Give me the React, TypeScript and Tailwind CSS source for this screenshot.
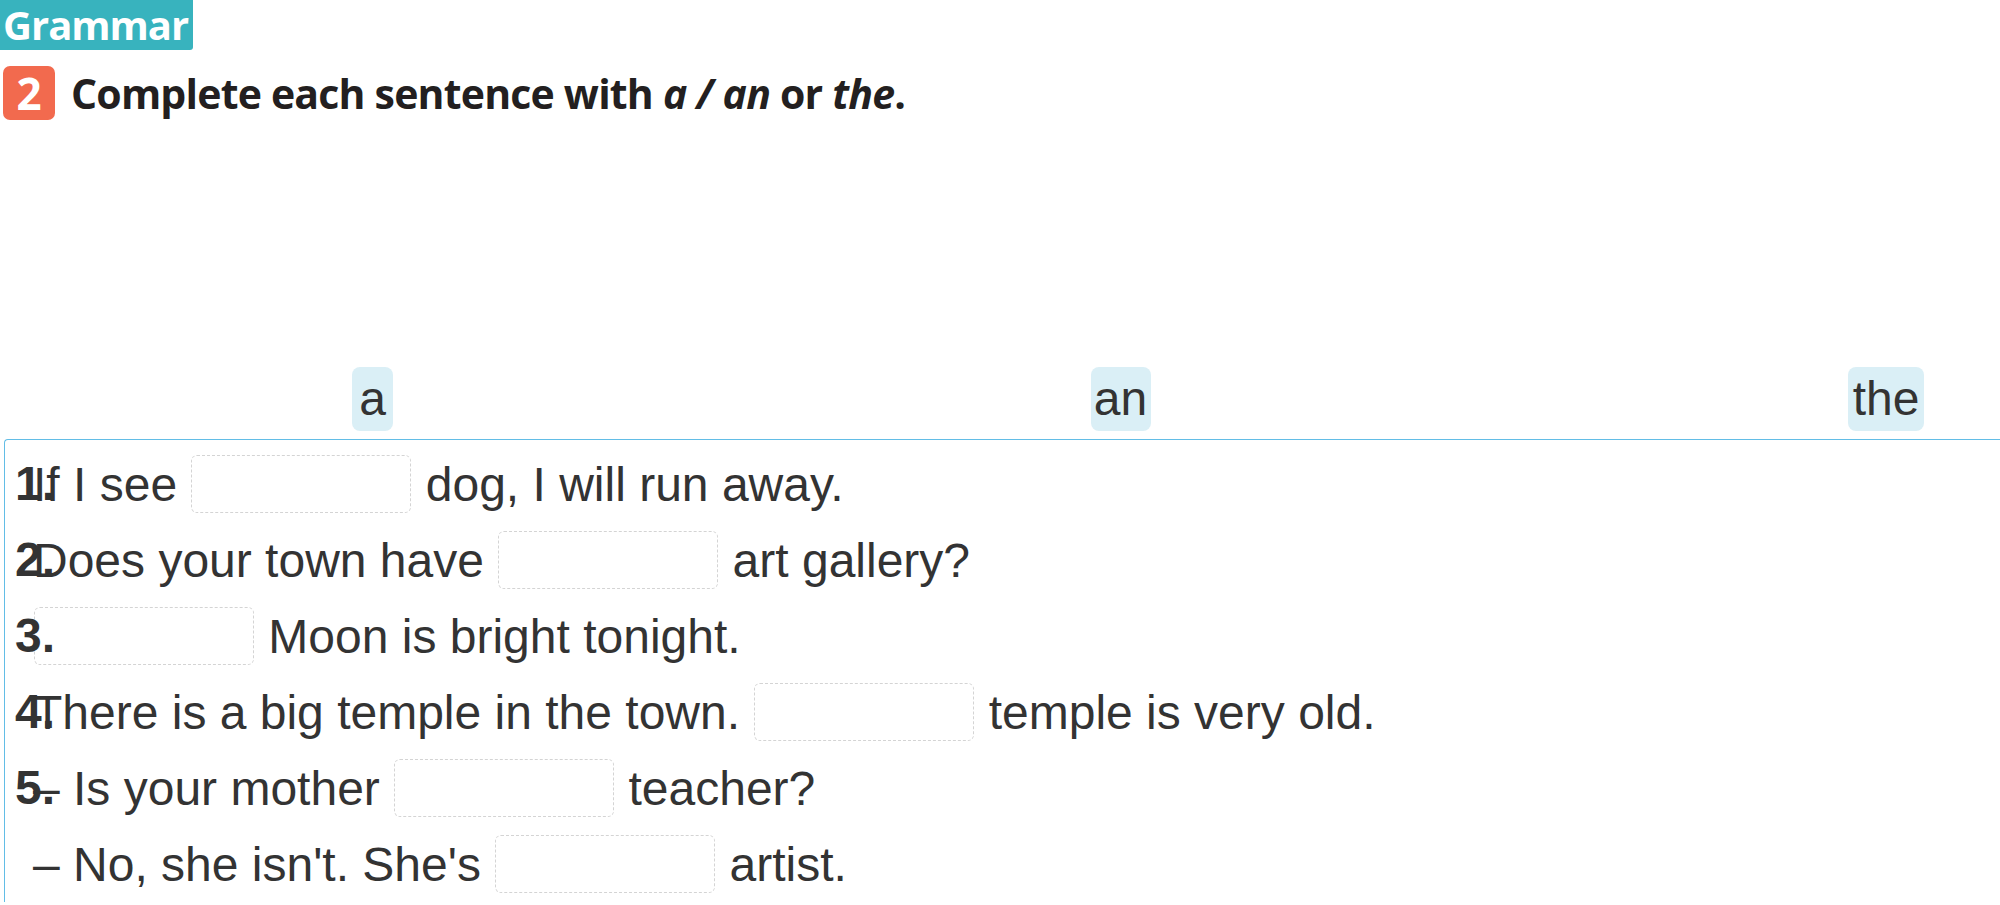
import React from 'react';

type Part = string | { blank: true };

interface Sentence {
  num?: string;
  parts: Part[];
}

const B: Part = { blank: true };

const sentences: Sentence[] = [
  { num: '1.', parts: ['If I see ', B, ' dog, I will run away.'] },
  { num: '2.', parts: ['Does your town have ', B, ' art gallery?'] },
  { num: '3.', parts: [B, ' Moon is bright tonight.'] },
  { num: '4.', parts: ['There is a big temple in the town. ', B, ' temple is very old.'] },
  { num: '5.', parts: ['– Is your mother ', B, ' teacher?'] },
  { parts: ['– No, she isn\'t. She\'s ', B, ' artist.'] },
];

const options = [
  { label: 'a', w: 'w-[41px]' },
  { label: 'an', w: 'w-[60px]' },
  { label: 'the', w: 'w-[76px]' },
];

const Blank = () => (
  <span className="inline-block w-[220px] h-[58px] mx-[1px] align-[-12px] rounded-[6px] border border-dashed border-[#d4d4d4]" />
);

export default function App() {
  return (
    <div className="min-h-screen bg-white text-[#333] overflow-hidden">
      {/* heading */}
      <div className="font-['Open_Sans',sans-serif]">
        <div className="w-[193px] h-[50px] bg-[#38b3be] rounded-br-[3px] flex items-center pl-[3px]">
          <span className="text-white font-bold text-[40px] leading-[50px] tracking-[-1px]">Grammar</span>
        </div>
        <div className="mt-[16px] flex items-center h-[54px]">
          <div className="ml-[3px] w-[52px] h-[54px] rounded-[7px] bg-[#f26a4e] flex items-center justify-center">
            <span className="text-white font-bold text-[44px] leading-[54px]">2</span>
          </div>
          <p className="ml-[16px] text-[#231f20] font-bold text-[41px] leading-[54px] tracking-[-0.8px]">
            Complete each sentence with <i>a / an</i> or <i>the</i>.
          </p>
        </div>
      </div>

      {/* answer chips */}
      <div className="mt-[247px] h-[64px] flex justify-between pl-[352px] pr-[76px] font-['Liberation_Sans',Arial,sans-serif]">
        {options.map((o) => (
          <div
            key={o.label}
            className={`${o.w} h-[64px] rounded-[8px] bg-[#daeff6] flex items-center justify-center text-[48px] leading-none`}
          >
            {o.label}
          </div>
        ))}
      </div>

      {/* sentences */}
      <div className="mt-[8px] ml-[4px] border-t border-l border-[#62bde6] rounded-tl-[4px] pt-[6px] pl-[10px] font-['Liberation_Sans',Arial,sans-serif] text-[48px]">
        {sentences.map((s, i) => (
          <div key={i} className="h-[76px] flex items-center">
            <span className="relative z-10 w-[18px] shrink-0 font-bold whitespace-nowrap leading-[48px]">{s.num ?? ''}</span>
            <span className="whitespace-pre leading-[48px]">
              {s.parts.map((p, j) => (typeof p === 'string' ? <React.Fragment key={j}>{p}</React.Fragment> : <Blank key={j} />))}
            </span>
          </div>
        ))}
      </div>
    </div>
  );
}
